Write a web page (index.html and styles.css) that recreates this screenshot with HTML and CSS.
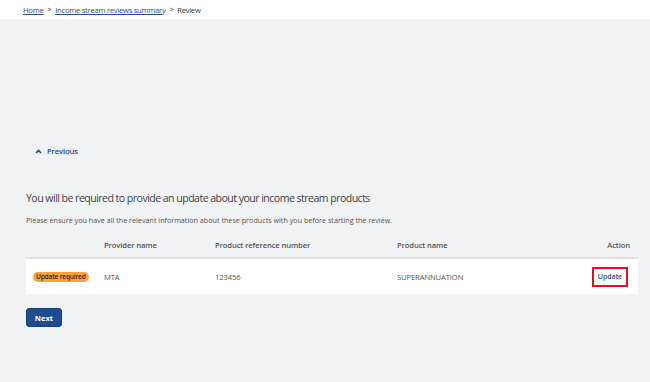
FILE: index.html
```html
<!DOCTYPE html>
<html lang="en">
<head>
<meta charset="utf-8">
<title>Review</title>
<link rel="stylesheet" href="styles.css">
</head>
<body>
<header class="topbar">
  <nav class="crumbs">
    <a href="#" class="crumb-link">Home</a>
    <span class="crumb-sep">&gt;</span>
    <a href="#" class="crumb-link">Income stream reviews summary</a>
    <span class="crumb-sep">&gt;</span>
    <span class="crumb-current">Review</span>
  </nav>
</header>
<main class="main">
  <a href="#" class="prev">
    <svg class="prev-icon" width="7" height="5" viewBox="0 0 7 5"><path d="M1 4 L3.5 1.5 L6 4" fill="none" stroke="#1f4a8a" stroke-width="1.6"/></svg>
    <span>Previous</span>
  </a>
  <h1 class="title">You will be required to provide an update about your income stream products</h1>
  <p class="intro">Please ensure you have all the relevant information about these products with you before starting the review.</p>
  <div class="table">
    <div class="thead">
      <span></span>
      <span>Provider name</span>
      <span>Product reference number</span>
      <span>Product name</span>
      <span class="right">Action</span>
    </div>
    <div class="trow">
      <span><span class="badge">Update required</span></span>
      <span>MTA</span>
      <span>123456</span>
      <span>SUPERANNUATION</span>
      <span class="right"><a href="#" class="update">Update</a></span>
    </div>
  </div>
  <button class="next">Next</button>
</main>
</body>
</html>
```
FILE: styles.css
```css
html, body {
  margin: 0;
  padding: 0;
}
body {
  background: #f1f2f4;
  font-family: "Open Sans", "Noto Sans", sans-serif;
  color: #444;
  height: 382px;
  overflow: hidden;
}
.topbar {
  background: #ffffff;
  height: 19px;
  display: flex;
  align-items: center;
  padding-left: 23px;
}
.crumbs {
  display: flex;
  align-items: center;
  gap: 4px;
  font-size: 7.6px;
  letter-spacing: -0.25px;
}
.crumb-link {
  color: #2b4a8a;
  text-decoration: underline;
}
.crumb-sep {
  color: #555;
  font-size: 7px;
  font-weight: 600;
}
.crumb-current {
  color: #333;
}
.main {
  padding: 0 12px 0 26px;
}
.prev {
  display: flex;
  align-items: center;
  gap: 5px;
  margin: 124px 0 0 9px;
  color: #1f4a8a;
  font-size: 7.6px;
  font-weight: 600;
  text-decoration: none;
  height: 16px;
  letter-spacing: -0.1px;
}
.title {
  margin: 31px 0 0;
  font-size: 10.6px;
  font-weight: 400;
  color: #444;
  line-height: 16px;
  letter-spacing: -0.55px;
}
.intro {
  margin: 8px 0 0;
  font-size: 7.2px;
  line-height: 12px;
  color: #555;
  letter-spacing: 0;
}
.table {
  margin-top: 7px;
  font-size: 7.6px;
  letter-spacing: -0.1px;
}
.thead, .trow {
  display: grid;
  grid-template-columns: 71px 111px 182px 1fr auto;
  align-items: center;
  padding: 0 8px 0 7px;
}
.thead {
  height: 24px;
  color: #555;
  font-weight: 600;
  border-bottom: 2px solid #dfe0e3;
}
.trow {
  background: #fff;
  height: 35px;
  color: #555;
}
.right {
  text-align: right;
}
.badge {
  display: inline-block;
  background: #f7a23b;
  color: #2a2a2a;
  font-size: 6.6px;
  font-weight: 600;
  border-radius: 6px;
  padding: 0 3px;
  line-height: 10px;
  letter-spacing: -0.2px;
}
.update {
  display: inline-block;
  border: 2px solid #e0121f;
  color: #1f4a8a;
  font-size: 7px;
  font-weight: 600;
  text-decoration: none;
  padding: 0 4px;
  line-height: 16px;
  margin-right: 2px;
}
.next {
  margin-top: 14px;
  background: #1f4c8f;
  color: #fff;
  border: 1px solid #183e78;
  border-radius: 3px;
  font-family: "Open Sans", "Noto Sans", sans-serif;
  font-size: 7.6px;
  font-weight: 700;
  width: 36px;
  height: 19px;
  padding: 0;
  cursor: pointer;
}
```
